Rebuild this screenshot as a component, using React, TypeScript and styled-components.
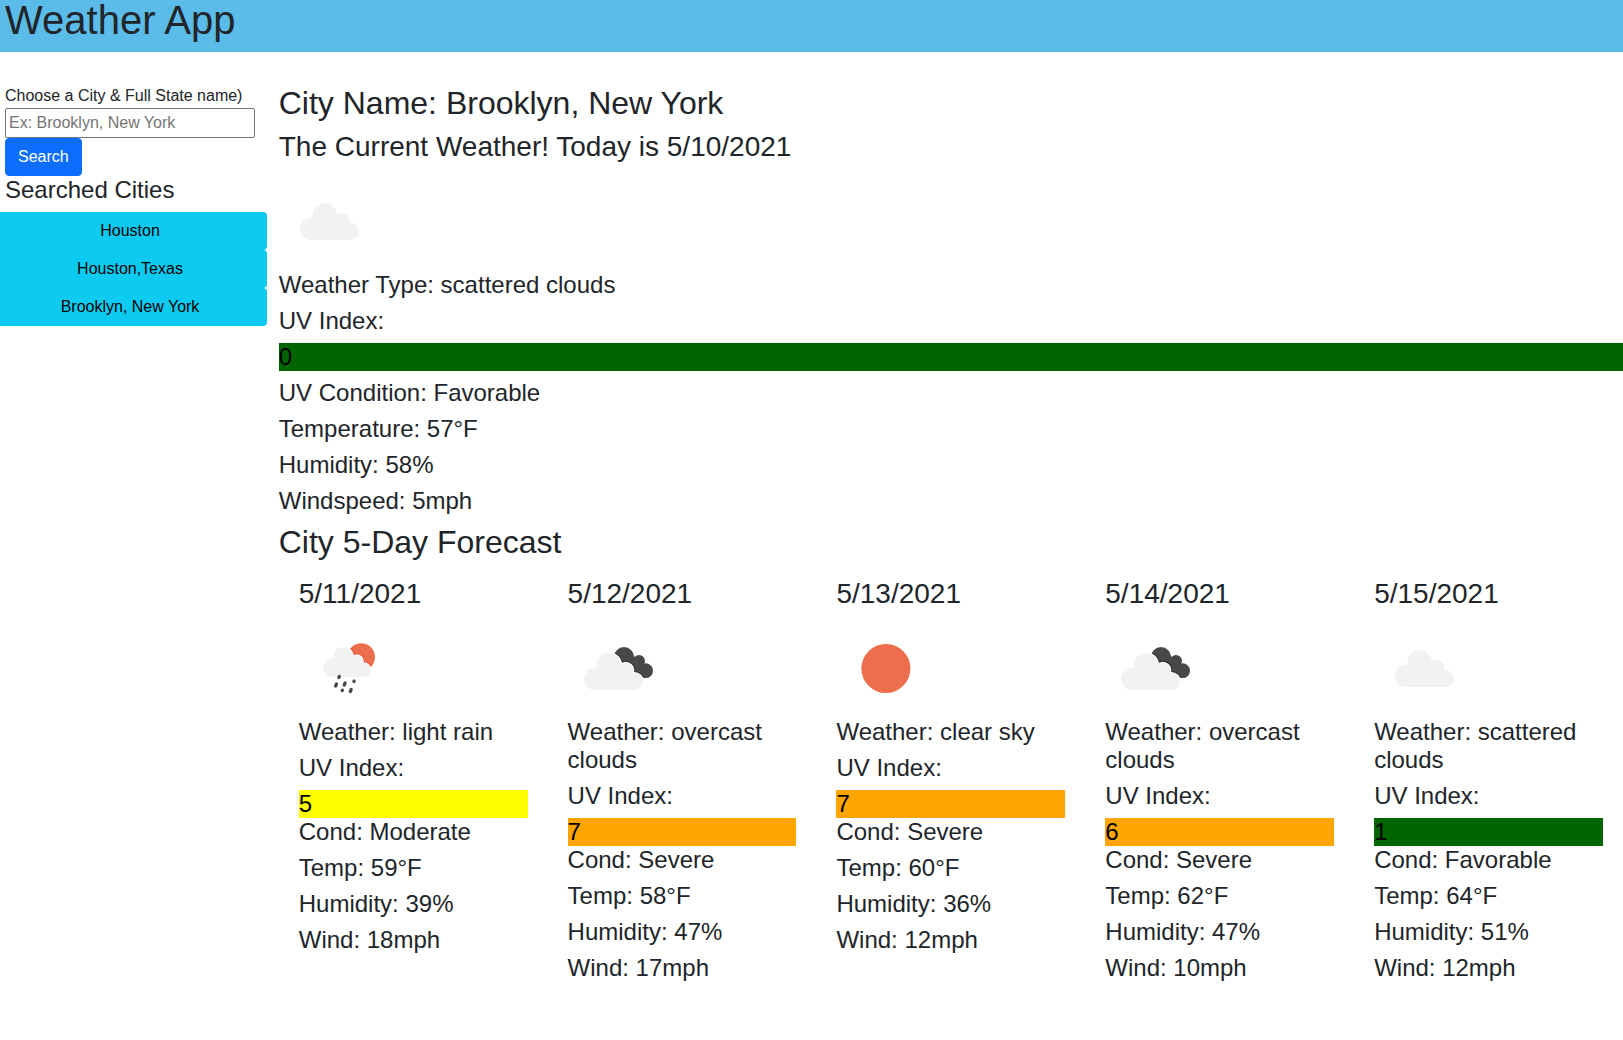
import React from "react";
import styled, { createGlobalStyle } from "styled-components";

const GlobalStyle = createGlobalStyle`
  *, *::before, *::after { box-sizing: border-box; }
  body {
    margin: 0;
    background: #fff;
    color: #212529;
    font: 400 16px/24px "Liberation Sans", Arial, sans-serif;
    overflow: hidden;
  }
`;

const Header = styled.header`
  height: 52px;
  padding-left: 5px;
  background: #5bbbe9;
`;

const AppTitle = styled.h1`
  margin: 0;
  font-size: 40px;
  line-height: 40px;
  font-weight: 400;
`;

const Layout = styled.div`
  display: grid;
  grid-template-columns: 278.75px minmax(0, 1fr);
  padding-top: 32px;
`;

const Sidebar = styled.aside`
  padding: 0 11.75px 0 5px;
`;

const SearchForm = styled.form`
  display: flex;
  flex-direction: column;
  align-items: flex-start;
`;

const SearchInput = styled.input`
  width: 250px;
  height: 30px;
  padding: 1px 3px;
  border: 1px solid #767676;
  border-radius: 2px;
  font: inherit;
  color: inherit;
  &::placeholder { color: #757575; opacity: 1; }
`;

const SearchButton = styled.button`
  height: 38px;
  padding: 6px 12px;
  border: 1px solid #0d6efd;
  border-radius: 4px;
  background: #0d6efd;
  color: #fff;
  font: inherit;
`;

const CityList = styled.div`
  display: flex;
  flex-direction: column;
  margin-left: -12px;
`;

const CityButton = styled.button`
  height: 38px;
  padding: 0;
  border: 0;
  border-radius: 4px;
  background: #0dcaf0;
  color: #000;
  font: inherit;
`;

const Title = styled.h2`
  margin: 0 0 8px;
  font-size: 32px;
  line-height: 38px;
  font-weight: 400;
`;

const Subtitle = styled.h3`
  margin: 0 0 8px;
  font-size: 28px;
  line-height: 33px;
  font-weight: 400;
`;

const Line = styled.h4`
  margin: 0 0 8px;
  font-size: 24px;
  line-height: 28px;
  font-weight: 400;
`;

const UvBar = styled(Line)<{ $color: string; $flush?: boolean }>`
  margin-bottom: ${(p) => (p.$flush ? 0 : 8)}px;
  background: ${(p) => p.$color};
  color: #000;
`;

const Icon = styled.svg`
  display: block;
  width: 100px;
  height: 100px;
`;

const Forecast = styled.section`
  display: grid;
  grid-template-columns: repeat(5, minmax(0, 1fr));
  padding-top: 8px;
`;

const Day = styled.article`
  padding: 0 20px;
`;

const CloudShape = () => (
  <>
    <circle cx="32.2" cy="57.8" r="11.2" />
    <circle cx="45.8" cy="44.2" r="12.2" />
    <circle cx="62.8" cy="49.4" r="7.5" />
    <circle cx="71.4" cy="60.5" r="8.5" />
    <path d="M32.2 69V47.5L45 42l18 6 8.4 6v15z" />
  </>
);

const DarkCloudShape = () => (
  <>
    <circle cx="56" cy="39" r="10" />
    <circle cx="71" cy="43" r="6" />
    <circle cx="77.6" cy="52.7" r="7.4" />
    <path d="M56 39l8-4 2.5 4 4.5 2 6 5.5-3 13-12-2z" />
  </>
);

type Kind = "cloud" | "overcast" | "rain" | "sun";

const WeatherIcon = ({ kind }: { kind: Kind }) => {
  const id = React.useId();
  return (
    <Icon viewBox="0 0 100 100">
      {kind === "sun" && <circle cx="49.9" cy="50.5" r="24.5" fill="#ec6e4c" />}
      {kind === "cloud" && (
        <g fill="#f2f2f0">
          <CloudShape />
        </g>
      )}
      {kind === "overcast" && (
        <>
          <clipPath id={id}>
            <DarkCloudShape />
          </clipPath>
          <g fill="#48484a">
            <DarkCloudShape />
          </g>
          <g clipPath={`url(#${id})`}>
            <g transform="translate(-5 3)" fill="#222" stroke="#222" strokeWidth="3.6">
              <CloudShape />
            </g>
          </g>
          <g transform="translate(-5 3)">
            <g fill="#fff" stroke="#fff" strokeWidth="2.2">
              <CloudShape />
            </g>
            <g fill="#f2f2f0">
              <CloudShape />
            </g>
          </g>
        </>
      )}
      {kind === "rain" && (
        <>
          <clipPath id={id}>
            <circle cx="62.2" cy="39" r="13.8" />
          </clipPath>
          <circle cx="62.2" cy="39" r="13.8" fill="#ec6e4c" />
          <g clipPath={`url(#${id})`}>
            <g transform="translate(6.9 2.9) scale(.813)" fill="#e8472a" stroke="#e8472a" strokeWidth="3.8">
              <CloudShape />
            </g>
          </g>
          <g transform="translate(6.9 2.9) scale(.813)">
            <g fill="#fff" stroke="#fff" strokeWidth="2">
              <CloudShape />
            </g>
            <g fill="#f2f2f2">
              <CloudShape />
            </g>
          </g>
          <g stroke="#48484a" strokeWidth="3.3" strokeLinecap="round">
            <path d="M40.4 58.4l-.6 1.2M37.5 66l-.9 2.1M46.1 65l-.9 2.1M55.1 63.1l-.2.4M43.4 72.2l-.2.4M52.2 71.4l-.9 2.1" />
          </g>
        </>
      )}
    </Icon>
  );
};

interface DayData {
  date: string;
  kind: Kind;
  weather: string;
  uv: number;
  color: string;
  cond: string;
  temp: number;
  humidity: number;
  wind: number;
}

const days: DayData[] = [
  { date: "5/11/2021", kind: "rain", weather: "light rain", uv: 5, color: "yellow", cond: "Moderate", temp: 59, humidity: 39, wind: 18 },
  { date: "5/12/2021", kind: "overcast", weather: "overcast clouds", uv: 7, color: "orange", cond: "Severe", temp: 58, humidity: 47, wind: 17 },
  { date: "5/13/2021", kind: "sun", weather: "clear sky", uv: 7, color: "orange", cond: "Severe", temp: 60, humidity: 36, wind: 12 },
  { date: "5/14/2021", kind: "overcast", weather: "overcast clouds", uv: 6, color: "orange", cond: "Severe", temp: 62, humidity: 47, wind: 10 },
  { date: "5/15/2021", kind: "cloud", weather: "scattered clouds", uv: 1, color: "darkgreen", cond: "Favorable", temp: 64, humidity: 51, wind: 12 },
];

const cities = ["Houston", "Houston,Texas", "Brooklyn, New York"];

export default function App() {
  return (
    <>
      <GlobalStyle />
      <Header>
        <AppTitle>Weather App</AppTitle>
      </Header>
      <Layout>
        <Sidebar>
          <SearchForm onSubmit={(e) => e.preventDefault()}>
            <label htmlFor="city">Choose a City &amp; Full State name)</label>
            <SearchInput id="city" placeholder="Ex: Brooklyn, New York" />
            <SearchButton>Search</SearchButton>
          </SearchForm>
          <Line>Searched Cities</Line>
          <CityList>
            {cities.map((city) => (
              <CityButton key={city}>{city}</CityButton>
            ))}
          </CityList>
        </Sidebar>
        <main>
          <Title>City Name: Brooklyn, New York</Title>
          <Subtitle>The Current Weather! Today is 5/10/2021</Subtitle>
          <WeatherIcon kind="cloud" />
          <Line>Weather Type: scattered clouds</Line>
          <Line>UV Index:</Line>
          <UvBar $color="darkgreen">0</UvBar>
          <Line>UV Condition: Favorable</Line>
          <Line>Temperature: 57°F</Line>
          <Line>Humidity: 58%</Line>
          <Line>Windspeed: 5mph</Line>
          <Title>City 5-Day Forecast</Title>
          <Forecast>
            {days.map((d) => (
              <Day key={d.date}>
                <Subtitle>{d.date}</Subtitle>
                <WeatherIcon kind={d.kind} />
                <Line>Weather: {d.weather}</Line>
                <Line>UV Index:</Line>
                <UvBar $color={d.color} $flush>{d.uv}</UvBar>
                <Line>Cond: {d.cond}</Line>
                <Line>Temp: {d.temp}°F</Line>
                <Line>Humidity: {d.humidity}%</Line>
                <Line>Wind: {d.wind}mph</Line>
              </Day>
            ))}
          </Forecast>
        </main>
      </Layout>
    </>
  );
}
